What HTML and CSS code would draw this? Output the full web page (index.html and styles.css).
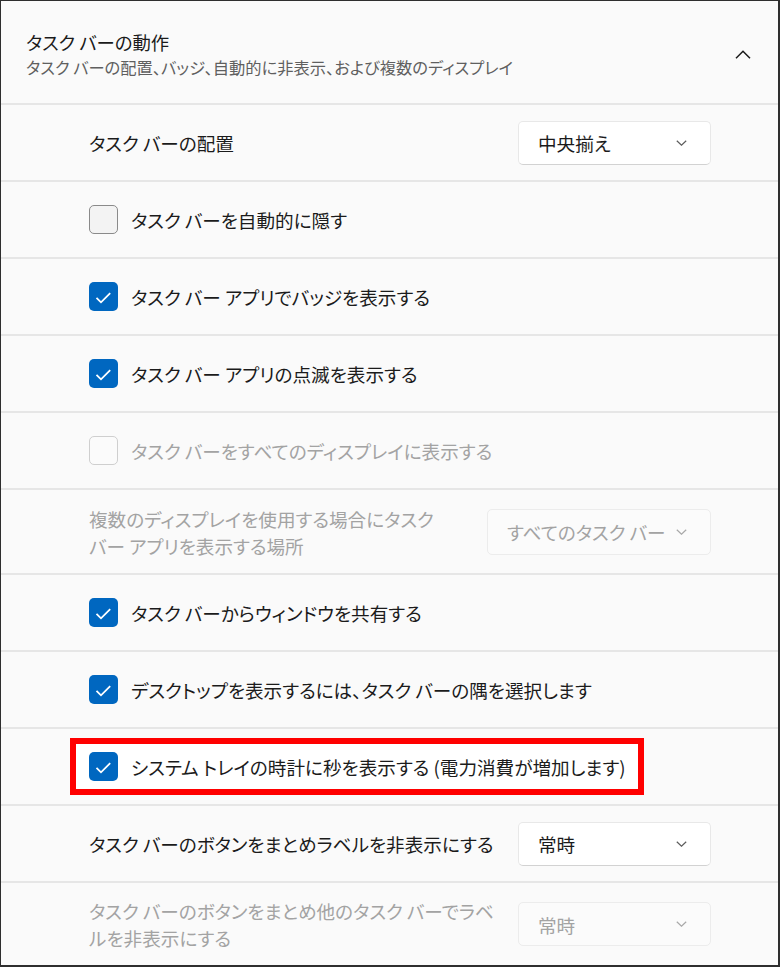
FILE: index.html
```html
<!DOCTYPE html>
<html lang="ja">
<head>
  <meta charset="UTF-8" />
  <meta name="viewport" content="width=device-width, initial-scale=1.0"/>
  <title>タスク バーの動作</title>
  <link rel="stylesheet" href="styles.css">
</head>
<body>
  <div class="panel">
    <header class="head">
      <div class="head-text">
        <div class="head-title">タスク バーの動作</div>
        <div class="head-sub">タスク バーの配置、バッジ、自動的に非表示、および複数のディスプレイ</div>
      </div>
      <svg class="chev-up" width="16" height="9" viewBox="0 0 16 9"><path d="M1 8.2 L8 1.2 L15 8.2" fill="none" stroke="#1b1b1b" stroke-width="1.5"/></svg>
    </header>

    <div class="row">
      <span class="label">タスク バーの配置</span>
      <div class="select"><span>中央揃え</span><svg class="chev" width="11" height="6" viewBox="0 0 11 6"><path d="M0.8 0.8 L5.5 5.2 L10.2 0.8" fill="none" stroke="#5c5c5c" stroke-width="1.2"/></svg></div>
    </div>

    <div class="row">
      <label class="check"><span class="box"></span>タスク バーを自動的に隠す</label>
    </div>

    <div class="row">
      <label class="check"><span class="box on"><svg width="29" height="29" viewBox="0 0 29 29"><path d="M7.5 15.8 L12 20.3 L21.2 11.2" fill="none" stroke="#fff" stroke-width="1.8"/></svg></span>タスク バー アプリでバッジを表示する</label>
    </div>

    <div class="row">
      <label class="check"><span class="box on"><svg width="29" height="29" viewBox="0 0 29 29"><path d="M7.5 15.8 L12 20.3 L21.2 11.2" fill="none" stroke="#fff" stroke-width="1.8"/></svg></span>タスク バー アプリの点滅を表示する</label>
    </div>

    <div class="row">
      <label class="check disabled"><span class="box"></span>タスク バーをすべてのディスプレイに表示する</label>
    </div>

    <div class="row tall">
      <span class="label disabled">複数のディスプレイを使用する場合にタスク<br>バー アプリを表示する場所</span>
      <div class="select wide disabled"><span>すべてのタスク バー</span><svg class="chev" width="11" height="6" viewBox="0 0 11 6"><path d="M0.8 0.8 L5.5 5.2 L10.2 0.8" fill="none" stroke="#a8a8a8" stroke-width="1.2"/></svg></div>
    </div>

    <div class="row">
      <label class="check"><span class="box on"><svg width="29" height="29" viewBox="0 0 29 29"><path d="M7.5 15.8 L12 20.3 L21.2 11.2" fill="none" stroke="#fff" stroke-width="1.8"/></svg></span>タスク バーからウィンドウを共有する</label>
    </div>

    <div class="row">
      <label class="check"><span class="box on"><svg width="29" height="29" viewBox="0 0 29 29"><path d="M7.5 15.8 L12 20.3 L21.2 11.2" fill="none" stroke="#fff" stroke-width="1.8"/></svg></span>デスクトップを表示するには、タスク バーの隅を選択します</label>
    </div>

    <div class="row marked">
      <label class="check mark-box"><span class="box on"><svg width="29" height="29" viewBox="0 0 29 29"><path d="M7.5 15.8 L12 20.3 L21.2 11.2" fill="none" stroke="#fff" stroke-width="1.8"/></svg></span>システム トレイの時計に秒を表示する (電力消費が増加します)</label>
    </div>

    <div class="row">
      <span class="label">タスク バーのボタンをまとめラベルを非表示にする</span>
      <div class="select"><span>常時</span><svg class="chev" width="11" height="6" viewBox="0 0 11 6"><path d="M0.8 0.8 L5.5 5.2 L10.2 0.8" fill="none" stroke="#5c5c5c" stroke-width="1.2"/></svg></div>
    </div>

    <div class="row last">
      <span class="label disabled">タスク バーのボタンをまとめ他のタスク バーでラベ<br>ルを非表示にする</span>
      <div class="select disabled"><span>常時</span><svg class="chev" width="11" height="6" viewBox="0 0 11 6"><path d="M0.8 0.8 L5.5 5.2 L10.2 0.8" fill="none" stroke="#a8a8a8" stroke-width="1.2"/></svg></div>
    </div>
  </div>
</body>
</html>
```

FILE: styles.css
```css
body { margin: 0; font-family: "Noto Sans CJK JP", "Noto Sans", sans-serif; font-feature-settings: "palt"; color: #1b1b1b; background: #fafafa; }
.panel { width: 780px; height: 967px; box-sizing: border-box; border: 1px solid #2e2e2e; border-right-width: 2px; border-bottom-width: 2px; background: #fafafa; display: flex; flex-direction: column; overflow: hidden; }

.head { height: 102px; box-sizing: border-box; padding: 5px 27px 0 25px; display: flex; align-items: center; justify-content: space-between; }
.head-title { font-size: 18.4px; line-height: 25px; }
.head-sub { font-size: 16.3px; line-height: 25px; color: #5f5f5f; }

.row { height: 77px; box-sizing: border-box; border-top: 2px solid #e6e6e6; padding: 0 67px 0 88px; display: flex; align-items: center; justify-content: space-between; font-size: 18.6px; white-space: nowrap; }
.row.tall { height: 85px; }
.row.last { flex: 1; height: auto; }
.row.marked { padding-left: 69px; }
.label { line-height: 27px; }
.disabled { color: #a3a3a3; }

.check { display: flex; align-items: center; gap: 13px; line-height: 27px; }
.box { width: 29px; height: 29px; flex-shrink: 0; box-sizing: border-box; border: 1.5px solid #8a8a8a; border-radius: 5px; background: #f3f3f3; display: flex; }
.box.on { border: none; background: #0067c0; }
.check.disabled .box { border-color: #cfcfcf; background: #fbfbfb; }

.mark-box { border: 6px solid #ff0000; background: #fff; padding: 8px 12px 8px 13px; }

.select { width: 193px; height: 44px; flex-shrink: 0; box-sizing: border-box; padding: 0 23px 0 19px; display: flex; align-items: center; justify-content: space-between; background: #fff; border: 1px solid #e8e8e8; border-bottom-color: #d2d2d2; border-radius: 5px; }
.select.wide { width: 224px; height: 46px; }
.select.disabled { background: #fbfbfb; border-color: #ececec; }
```
